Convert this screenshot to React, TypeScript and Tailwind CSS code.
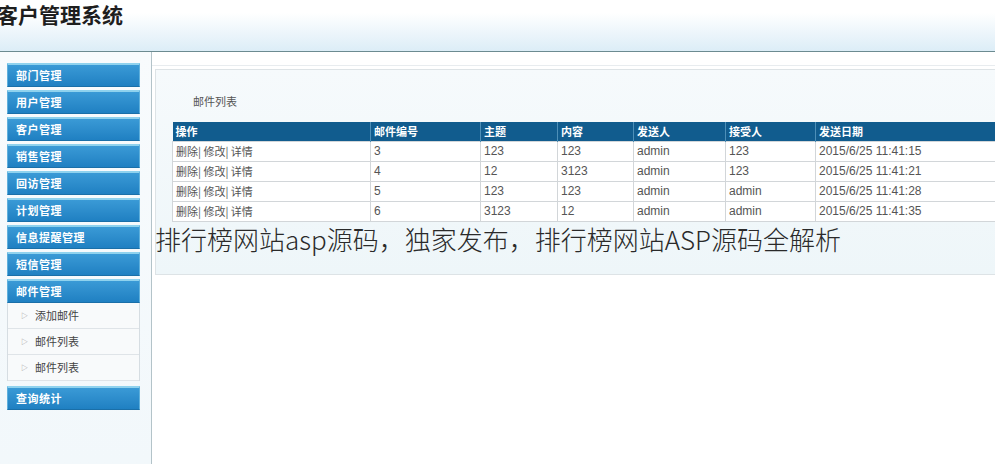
import React from "react";

const menus = ["部门管理", "用户管理", "客户管理", "销售管理", "回访管理", "计划管理", "信息提醒管理", "短信管理"];
const subs = ["添加邮件", "邮件列表", "邮件列表"];
const cols = [
  { t: "操作", w: 198 },
  { t: "邮件编号", w: 110 },
  { t: "主题", w: 77 },
  { t: "内容", w: 76 },
  { t: "发送人", w: 92 },
  { t: "接受人", w: 90 },
  { t: "发送日期", w: 190 },
];
const rows = [
  ["删除| 修改| 详情", "3", "123", "123", "admin", "123", "2015/6/25 11:41:15"],
  ["删除| 修改| 详情", "4", "12", "3123", "admin", "123", "2015/6/25 11:41:21"],
  ["删除| 修改| 详情", "5", "123", "123", "admin", "admin", "2015/6/25 11:41:28"],
  ["删除| 修改| 详情", "6", "3123", "12", "admin", "admin", "2015/6/25 11:41:35"],
];

function MenuItem({ label }: { label: string }) {
  return (
    <div className="h-[24px] flex items-center pl-[8px] bg-gradient-to-b from-[#3a9ad6] to-[#1f80c2] border-t-2 border-[#8fd2ee] border-x border-x-[#5fb0dc] border-b border-b-[#1a6fa8] text-white font-bold text-[11px] tracking-[0.5px]">
      {label}
    </div>
  );
}

export default function App() {
  return (
    <div
      className="w-[995px] h-[464px] overflow-hidden bg-white relative text-[#333]"
      style={{ fontFamily: '"Liberation Sans", "Noto Sans CJK SC", sans-serif' }}
    >
      <header className="h-[52px] bg-gradient-to-b from-white from-25% to-[#dcedf7] border-b border-[#6c8b91]">
        <h1 className="ml-[-3px] pt-[1px] text-[21px] leading-[26px] font-bold text-[#1e1e1e]" style={{ fontFamily: '"Noto Sans CJK SC", sans-serif' }}>
          客户管理系统
        </h1>
      </header>
      <div className="flex h-[412px]">
        <aside className="w-[152px] shrink-0 border-r border-[#b3c3c9] bg-gradient-to-b from-[#f8fbfd] to-[#f2f8fb] pt-[11px] pl-[7px] pr-[11px]" style={{ fontFamily: '"Noto Sans CJK SC", sans-serif' }}>
          <div className="flex flex-col gap-[3px]">
            {menus.map((m) => (
              <MenuItem key={m} label={m} />
            ))}
            <div>
              <MenuItem label="邮件管理" />
              <div className="border-x border-[#d6dde2] bg-[#f8fafb]">
                {subs.map((s, i) => (
                  <div key={i} className="h-[26px] flex items-center pl-[13px] border-b border-[#dfe4e8] text-[11px] text-[#444]">
                    <span className="text-[7px] text-[#999] mr-[7px]">▷</span>
                    {s}
                  </div>
                ))}
              </div>
            </div>
            <div className="mt-[2px]">
              <MenuItem label="查询统计" />
            </div>
          </div>
        </aside>
        <main className="flex-1 min-w-0 overflow-hidden">
          <div className="h-[14px] border-b border-[#e8ecef]"></div>
          <div className="h-[3px]"></div>
          <div className="ml-[3px] h-[206px] border-t border-l border-b border-[#dde3e6] bg-gradient-to-b from-[#f6fafc] to-[#eef6f9]">
            <div className="pl-[37px] pt-[23px] h-[52px] text-[11px] text-[#555]" style={{ fontFamily: '"Noto Sans CJK SC", sans-serif' }}>
              邮件列表
            </div>
            <table className="ml-[16px] border-collapse table-fixed text-[12px]" style={{ width: 833 }}>
              <colgroup>
                {cols.map((c, i) => (
                  <col key={i} style={{ width: c.w }} />
                ))}
              </colgroup>
              <thead>
                <tr className="h-[19px] bg-[#115c8e]">
                  {cols.map((c, i) => (
                    <th key={i} className="text-left pl-[3px] font-bold text-white text-[11px] border-r border-[#4d8fb8] leading-[19px]" style={{ fontFamily: '"Noto Sans CJK SC", sans-serif' }}>
                      {c.t}
                    </th>
                  ))}
                </tr>
              </thead>
              <tbody className="bg-white">
                {rows.map((r, ri) => (
                  <tr key={ri} className="h-[20px]">
                    {r.map((v, ci) => (
                      <td
                        key={ci}
                        className="pl-[3px] border border-[#d2d6d9] text-[#555] leading-[19px] whitespace-nowrap"
                        style={ci === 0 ? { fontFamily: '"Noto Sans CJK SC", sans-serif', fontSize: 11 } : undefined}
                      >
                        {v}
                      </td>
                    ))}
                  </tr>
                ))}
              </tbody>
            </table>
          </div>
        </main>
      </div>
      <div
        className="absolute left-[155px] top-[223px] text-[26px] leading-[32px] text-[#2a2a2a] whitespace-nowrap font-light"
        style={{ fontFamily: '"Noto Sans CJK SC", sans-serif' }}
      >
        排行榜网站asp源码，独家发布，排行榜网站ASP源码全解析
      </div>
    </div>
  );
}
